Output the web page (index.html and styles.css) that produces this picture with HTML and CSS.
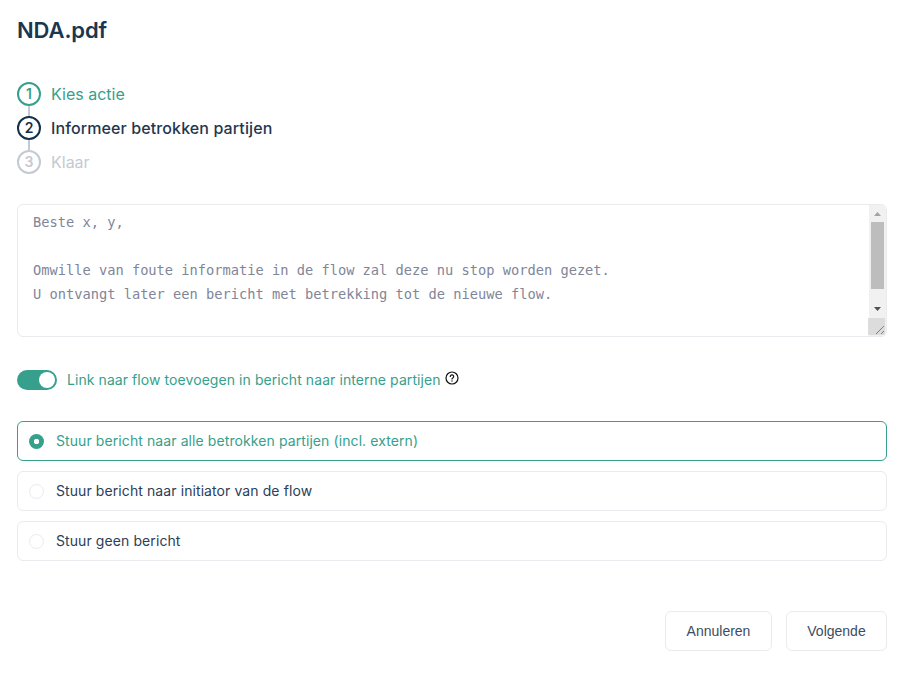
FILE: index.html
```html
<!DOCTYPE html>
<html lang="nl">
<head>
<meta charset="utf-8">
<title>NDA.pdf</title>
<link rel="stylesheet" href="styles.css">
</head>
<body>
<main class="dialog">
  <h1 class="title">NDA.pdf</h1>
  <ol class="steps">
    <li class="step step-done"><span class="step-num">1</span><span class="step-label">Kies actie</span></li>
    <li class="step step-current"><span class="step-num">2</span><span class="step-label">Informeer betrokken partijen</span></li>
    <li class="step step-todo"><span class="step-num">3</span><span class="step-label">Klaar</span></li>
  </ol>
  <div class="message">
    <div class="message-text">
      <p>Beste x, y,</p>
      <p>&nbsp;</p>
      <p>Omwille van foute informatie in de flow zal deze nu stop worden gezet.</p>
      <p>U ontvangt later een bericht met betrekking tot de nieuwe flow.</p>
    </div>
    <div class="scrollbar">
      <svg class="arrow" width="17" height="17" viewBox="0 0 17 17"><path d="M5 11h7L8.500 7z" fill="#a3a3a3"/></svg>
      <div class="track"><div class="thumb"></div></div>
      <svg class="arrow" width="17" height="17" viewBox="0 0 17 17"><path d="M5 7h7l-3.500 4z" fill="#505050"/></svg>
      <div class="resizer">
        <svg width="17" height="17" viewBox="0 0 17 17"><path d="M8 16L16 8M13 16l3-3" stroke="#555" stroke-width="1" stroke-dasharray="1 .5" fill="none"/></svg>
      </div>
    </div>
  </div>
  <div class="toggle-row">
    <span class="toggle"><span class="knob"></span></span>
    <span class="toggle-label">Link naar flow toevoegen in bericht naar interne partijen</span>
    <svg class="help" width="14" height="14" viewBox="0 0 14 14" fill="none" stroke="#111" stroke-width="1.200"><circle cx="7" cy="7" r="6"/><path d="M5.300 5.500a1.700 1.700 0 1 1 2.500 1.500c-.5.300-.8.600-.8 1.100" stroke-linecap="round"/><circle cx="7" cy="10" r=".4" fill="#111" stroke-width=".5"/></svg>
  </div>
  <div class="options">
    <div class="option option-on"><span class="radio"></span><span class="option-text">Stuur bericht naar alle betrokken partijen (incl. extern)</span></div>
    <div class="option"><span class="radio"></span><span class="option-text">Stuur bericht naar initiator van de flow</span></div>
    <div class="option"><span class="radio"></span><span class="option-text">Stuur geen bericht</span></div>
  </div>
  <div class="actions">
    <button class="btn btn-cancel" type="button">Annuleren</button>
    <button class="btn btn-next" type="button">Volgende</button>
  </div>
</main>
</body>
</html>
```
FILE: styles.css
```css
* { box-sizing: border-box; }
html, body { margin: 0; padding: 0; background: #fff; }
body { font-family: Inter, "Liberation Sans", sans-serif; color: #2b4058; width: 912px; height: 674px; overflow: hidden; }
.dialog { padding: 16px 25px 0 17px; }
.title { margin: 0; font-size: 22px; line-height: 28px; font-weight: 600; color: #1a3650; letter-spacing: -.1px; }
.steps { list-style: none; margin: 38px 0 0; padding: 0; }
.step { display: flex; align-items: center; gap: 10px; height: 24px; margin-bottom: 10px; position: relative; font-size: 16px; }
.step:last-child { margin-bottom: 0; }
.step:not(:last-child)::after { content: ""; position: absolute; left: 11px; top: 24px; width: 2px; height: 10px; background: #c5c9d3; }
.step-num { width: 24px; height: 24px; border-radius: 50%; border: 2px solid currentColor; display: flex; align-items: center; justify-content: center; font-size: 14px; font-weight: 600; line-height: 1; }
.step-done { color: #36a08c; }
.step-current { color: #14304a; }
.step-current .step-label { font-weight: 500; letter-spacing: .11px; color: #1f3750; }
.step-todo { color: #c5c9d3; }
.message { position: relative; margin-top: 30px; height: 133px; border: 1px solid #e9ebef; border-radius: 6px; display: flex; overflow: hidden; }
.message-text { flex: 1; padding: 5px 15px; font-family: "DejaVu Sans Mono", monospace; font-size: 13.7px; line-height: 24px; color: #7f8699; }
.message-text p { margin: 0; }
.scrollbar { width: 17px; background: #f1f1f1; display: flex; flex-direction: column; flex: none; }
.arrow { flex: none; display: block; }
.track { height: 78px; flex: none; }
.thumb { height: 67px; margin-left: 2px; background: #bdbdbd; width: 13px; }
.resizer { position: absolute; right: 1px; bottom: 1px; width: 17px; height: 17px; background: #dcdcdc; }
.resizer svg { display: block; }
.toggle-row { display: flex; align-items: center; margin-top: 33px; height: 20px; font-size: 14px; color: #36a08c; }
.toggle { width: 40px; height: 20px; border-radius: 10px; background: #36a08c; flex: none; display: flex; justify-content: flex-end; padding: 2px; }
.knob { width: 16px; height: 16px; border-radius: 50%; background: #fff; }
.toggle-label { margin: -2px 0 0 10px; letter-spacing: .07px; }
.help { margin: -5px 0 0 4px; flex: none; }
.options { margin-top: 31px; display: flex; flex-direction: column; gap: 10px; }
.option { height: 40px; border: 1px solid #e9ebef; border-radius: 6px; display: flex; align-items: center; padding-left: 11px; gap: 12px; font-size: 14px; color: #2b4058; }
.option-text { margin-top: -2px; letter-spacing: .09px; }
.radio { width: 15px; height: 15px; border-radius: 50%; border: 1px solid #e9ebef; background: #fff; flex: none; }
.option-on { border-color: #36a08c; color: #36a08c; }
.option-on .radio { border: 0; background: radial-gradient(circle, #fff 0 2.500px, #36a08c 3px); }
.actions { display: flex; justify-content: flex-end; gap: 14px; margin-top: 50px; }
.btn { height: 40px; background: #fff; border: 1px solid #e9ebef; border-radius: 6px; font-family: "Liberation Sans", Arial, sans-serif; font-size: 14px; color: #3d4d60; padding: 0; }
.btn-cancel { width: 107px; }
.btn-next { width: 101px; }
```
